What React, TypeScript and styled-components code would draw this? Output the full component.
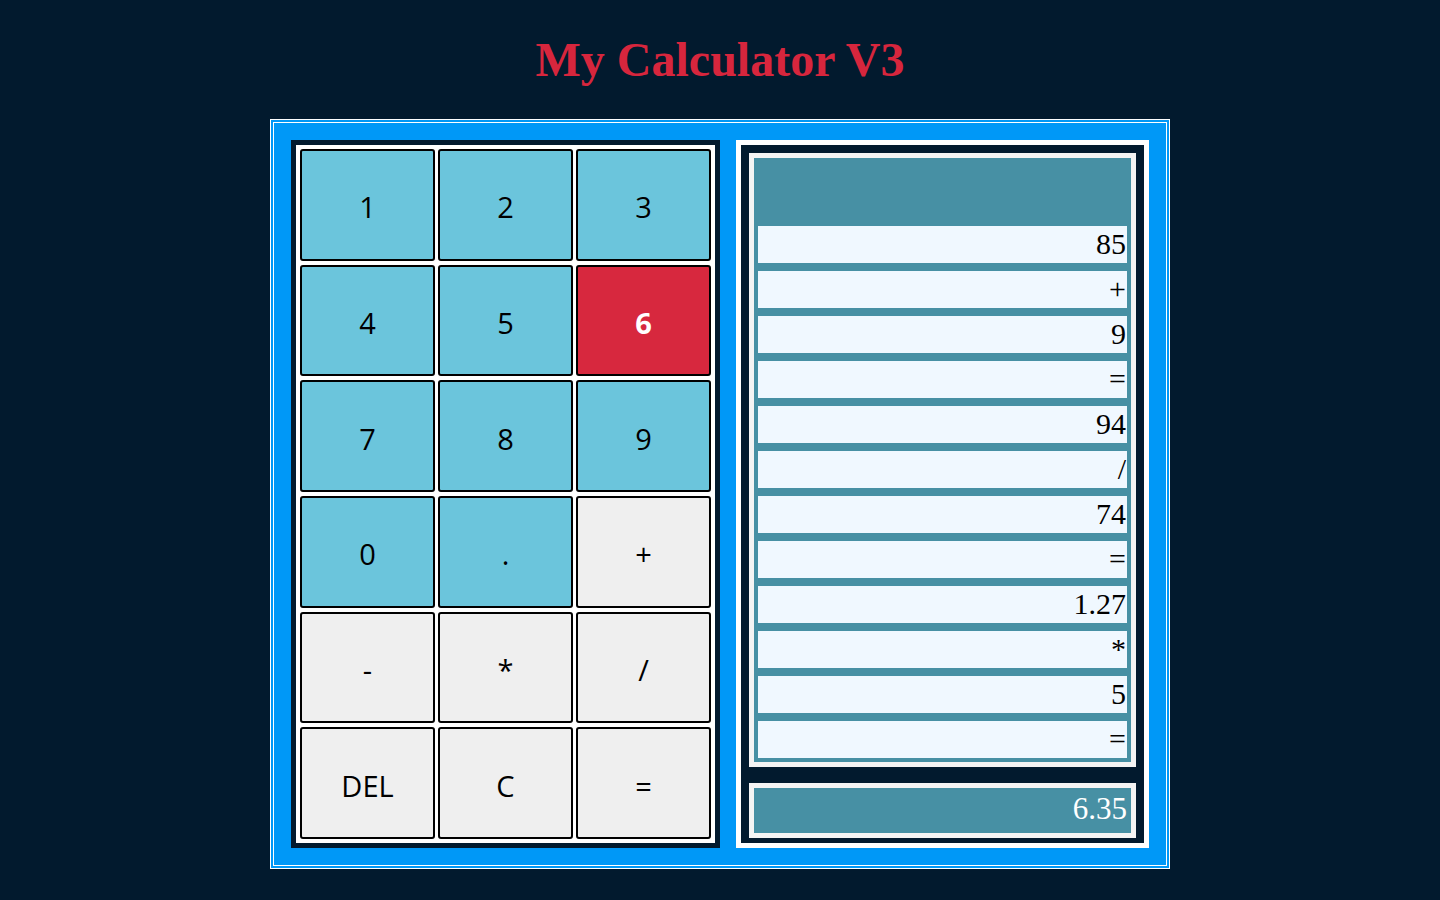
import React from 'react';
import styled, { createGlobalStyle } from 'styled-components';

const GlobalStyle = createGlobalStyle`
  html, body {
    margin: 0;
    padding: 0;
    background: #021a2e;
  }
  body {
    font-family: "Liberation Serif", "Times New Roman", serif;
  }
`;

const Page = styled.div`
  min-height: 900px;
  overflow: hidden;
`;

const Title = styled.h1`
  margin: 32px 0;
  text-align: center;
  font-family: "Liberation Serif", "Times New Roman", serif;
  font-size: 48px;
  font-weight: bold;
  line-height: normal;
  color: #d7263d;
`;

const Calculator = styled.div`
  width: 900px;
  height: 750px;
  box-sizing: border-box;
  margin: 0 auto;
  border: 4px double #ffffff;
  background: #0098f7;
  padding: 17px;
  display: flex;
  gap: 16px;
`;

const Keypad = styled.div`
  width: 429px;
  box-sizing: border-box;
  border: 5px solid #021a2e;
  background: #ffffff;
  padding: 4px;
  display: grid;
  grid-template-columns: repeat(3, 1fr);
  grid-template-rows: repeat(6, 1fr);
  gap: 4px 3px;
`;

const Key = styled.button<{ $variant: 'num' | 'op' | 'hot' }>`
  border: 2px solid #000000;
  border-radius: 3px;
  padding: 4px 0 0;
  margin: 0;
  font-family: "Open Sans", "Noto Sans", sans-serif;
  font-size: 29px;
  font-weight: ${(p) => (p.$variant === 'hot' ? 700 : 400)};
  color: ${(p) => (p.$variant === 'hot' ? '#ffffff' : '#000000')};
  background: ${(p) =>
    p.$variant === 'hot' ? '#d7283e' : p.$variant === 'num' ? '#6bc5dc' : '#efefef'};
  cursor: pointer;
`;

const Display = styled.div`
  width: 413px;
  box-sizing: border-box;
  border: 5px solid #ffffff;
  background: #021a2e;
  padding: 8px 8px 5px;
  display: flex;
  flex-direction: column;
  gap: 16px;
`;

const History = styled.div`
  border: 5px solid #f4f4f4;
  background: #4790a4;
  padding: 68px 4px 4px;
  display: flex;
  flex-direction: column;
  gap: 8px;
`;

const Entry = styled.div`
  height: 37px;
  box-sizing: border-box;
  background: #f0f8ff;
  color: #000000;
  font-family: "Liberation Serif", "Times New Roman", serif;
  font-size: 30px;
  line-height: normal;
  text-align: right;
  padding: 1px 1px 0 0;
  overflow: hidden;
`;

const Result = styled.div`
  height: 55px;
  box-sizing: border-box;
  border: 5px solid #f4f4f4;
  background: #4790a4;
  color: #ffffff;
  font-family: "Liberation Serif", "Times New Roman", serif;
  font-size: 31px;
  line-height: normal;
  text-align: right;
  padding: 3px 4px 0;
`;

const keys: { label: string; variant: 'num' | 'op' | 'hot' }[] = [
  { label: '1', variant: 'num' },
  { label: '2', variant: 'num' },
  { label: '3', variant: 'num' },
  { label: '4', variant: 'num' },
  { label: '5', variant: 'num' },
  { label: '6', variant: 'hot' },
  { label: '7', variant: 'num' },
  { label: '8', variant: 'num' },
  { label: '9', variant: 'num' },
  { label: '0', variant: 'num' },
  { label: '.', variant: 'num' },
  { label: '+', variant: 'op' },
  { label: '-', variant: 'op' },
  { label: '*', variant: 'op' },
  { label: '/', variant: 'op' },
  { label: 'DEL', variant: 'op' },
  { label: 'C', variant: 'op' },
  { label: '=', variant: 'op' },
];

const history = ['85', '+', '9', '=', '94', '/', '74', '=', '1.27', '*', '5', '='];

const App: React.FC = () => {
  return (
    <Page>
      <GlobalStyle />
      <Title>My Calculator V3</Title>
      <Calculator>
        <Keypad>
          {keys.map((k) => (
            <Key key={k.label} $variant={k.variant}>
              {k.label}
            </Key>
          ))}
        </Keypad>
        <Display>
          <History>
            {history.map((h, i) => (
              <Entry key={i}>{h}</Entry>
            ))}
          </History>
          <Result>6.35</Result>
        </Display>
      </Calculator>
    </Page>
  );
};

export default App;
